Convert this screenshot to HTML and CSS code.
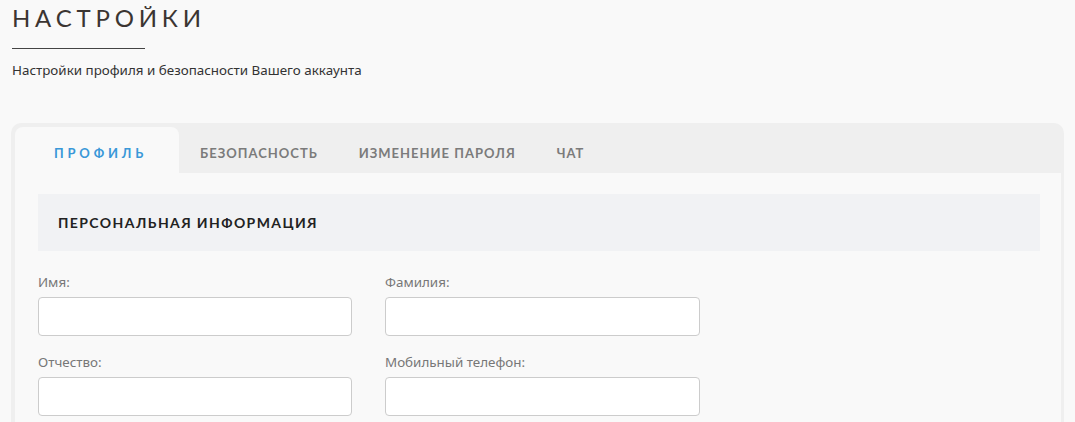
FILE: index.html
```html
<!DOCTYPE html>
<html lang="ru">
<head>
    <meta charset="UTF-8">
    <meta name="viewport" content="width=device-width, initial-scale=1.0">
    <title>Настройки</title>
    <link rel="stylesheet" href="styles.css">
</head>
<body>
    <div class="page-header">
        <h1>НАСТРОЙКИ</h1>
        <div class="title-line"></div>
        <p class="subtitle">Настройки профиля и безопасности Вашего аккаунта</p>
    </div>

    <div class="settings-card">
        <div class="tabs">
            <div class="tab active">ПРОФИЛЬ</div>
            <div class="tab">БЕЗОПАСНОСТЬ</div>
            <div class="tab">ИЗМЕНЕНИЕ ПАРОЛЯ</div>
            <div class="tab">ЧАТ</div>
        </div>

        <div class="tab-content">
            <div class="section-title">ПЕРСОНАЛЬНАЯ ИНФОРМАЦИЯ</div>

            <form class="profile-form">
                <div class="form-group">
                    <label for="firstName">Имя:</label>
                    <input type="text" id="firstName" name="firstName">
                </div>
                <div class="form-group">
                    <label for="lastName">Фамилия:</label>
                    <input type="text" id="lastName" name="lastName">
                </div>
                <div class="form-group">
                    <label for="middleName">Отчество:</label>
                    <input type="text" id="middleName" name="middleName">
                </div>
                <div class="form-group">
                    <label for="phone">Мобильный телефон:</label>
                    <input type="text" id="phone" name="phone">
                </div>
            </form>
        </div>
    </div>
</body>
</html>
```

FILE: styles.css
```css
body {
    font-family: "Noto Sans", Arial, sans-serif;
    background-color: #f9f9f9;
    margin: 0;
    padding: 0 11px 0 12px;
    color: #333;
}

h1 {
    margin: 0;
    padding-top: 3px;
    font-family: Lato, sans-serif;
    font-size: 24px;
    line-height: 30px;
    font-weight: 400;
    letter-spacing: 4.8px;
    color: #3b3532;
}

.title-line {
    width: 133px;
    height: 1px;
    background-color: #444;
    margin-top: 15px;
}

.subtitle {
    margin: 12px 0 0;
    font-size: 13.4px;
    line-height: 18px;
    color: #333;
}

.settings-card {
    margin-top: 44px;
    margin-left: -1px;
    background-color: #efefef;
    border-radius: 10px 10px 0 0;
    padding: 4px 3px 0 4px;
}

.tabs {
    display: flex;
    height: 46px;
}

.tab {
    display: flex;
    align-items: center;
    padding: 5px 20px 0 21px;
    font-family: Lato, sans-serif;
    font-weight: 700;
    font-size: 13px;
    letter-spacing: 1px;
    color: #7b7b7b;
}

.tab.active {
    background-color: #f9f9f9;
    border-radius: 8px 8px 0 0;
    padding: 5px 32px 0 39px;
    color: #3a98d8;
    letter-spacing: 3.8px;
}

.tab-content {
    background-color: #f9f9f9;
    padding: 21px 21px 20px 23px;
}

.section-title {
    background-color: #f1f2f4;
    height: 57px;
    display: flex;
    align-items: center;
    padding-left: 20px;
    font-family: Lato, sans-serif;
    font-weight: 700;
    font-size: 14px;
    letter-spacing: 1.4px;
    color: #222;
}

.profile-form {
    display: grid;
    grid-template-columns: 314px 315px;
    column-gap: 33px;
    row-gap: 17px;
    padding-top: 22px;
}

label {
    display: block;
    font-size: 13.4px;
    line-height: 18px;
    color: #777;
    margin-bottom: 6px;
}

input[type="text"] {
    display: block;
    width: 100%;
    height: 39px;
    box-sizing: border-box;
    border: 1px solid #ccc;
    border-radius: 4px;
    background-color: #fff;
    padding: 8px 10px;
    font-size: 13px;
}
```
